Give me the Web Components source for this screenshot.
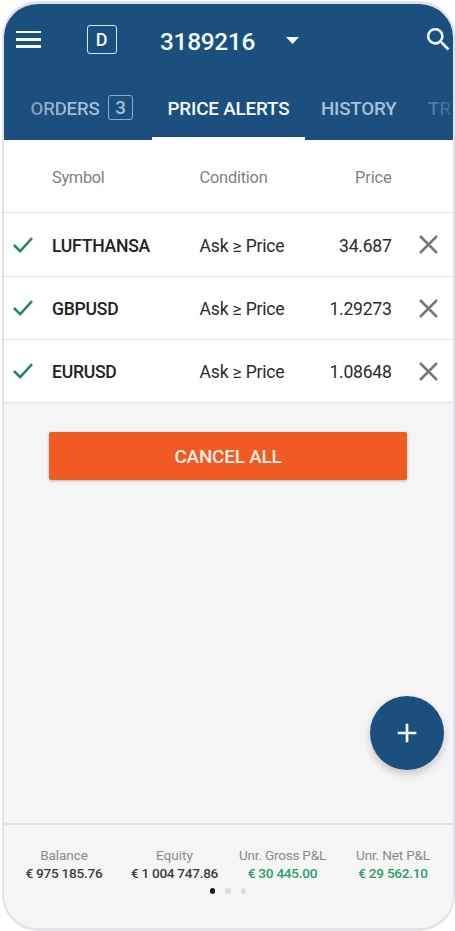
<!DOCTYPE html>
<html lang="en">
<head>
<meta charset="utf-8">
<title>Price alerts</title>
<style>
html,body{margin:0;height:931px;background:#fff;overflow:hidden}
body{font-family:Roboto,"Liberation Sans",sans-serif}
</style>
</head>
<body>
<trading-app></trading-app>
<script>
const define = (name, html, init) => customElements.define(name, class extends HTMLElement {
  constructor() {
    super();
    this.attachShadow({ mode: 'open' }).innerHTML = html;
  }
  connectedCallback() { if (init) init.call(this, this.shadowRoot); }
});

/* Single line label; "w" is the advance width its letters are tracked to fill. */
define('text-run', `<style>
:host{display:block;white-space:nowrap;line-height:1;width:max-content}
</style><span><slot></slot></span>`, function (root) {
  const span = root.querySelector('span');
  const target = parseFloat(this.getAttribute('w'));
  const count = this.textContent.length;
  if (!target || !count) return;
  const natural = span.getBoundingClientRect().width;
  span.style.letterSpacing = ((target - natural) / count).toFixed(3) + 'px';
});

define('top-bar', `<style>
:host{display:grid;grid-template-columns:25px 46px 30px 43px 95px 31px 13px 123.5px 31px;justify-content:start;align-items:center;height:71px;padding-left:12px;color:#f4fafd}
.menu{display:grid;gap:4.5px;height:17px;align-content:start;margin-top:-1px}
.menu i{height:2.8px;background:#f1f8fc}
.badge{grid-column:3;box-sizing:border-box;width:29.5px;height:29px;border:1.5px solid #d9e8f2;border-radius:3px;display:grid;place-items:center;font-size:18px;font-weight:500;margin-top:0}
.acct{grid-column:5;font-size:24.4px;font-weight:500;margin-top:6px}
.caret{grid-column:7;display:block;margin-top:2px}
.find{grid-column:9;display:block}
</style>
<div class="menu"><i></i><i></i><i></i></div>
<div class="badge"><text-run>D</text-run></div>
<text-run class="acct" w="95">3189216</text-run>
<svg class="caret" width="13" height="7" viewBox="0 0 13 7"><path d="M0 0H13L6.5 7Z" fill="#f4fafd"/></svg>
<svg class="find" width="31" height="31" viewBox="0 0 24 24"><path fill="#f1f8fc" d="M15.5 14h-.79l-.28-.27A6.47 6.47 0 0 0 16 9.5 6.5 6.5 0 1 0 9.5 16c1.61 0 3.09-.59 4.23-1.57l.27.28v.79l5 4.99L20.49 19l-4.99-5zm-6 0C7.01 14 5 11.99 5 9.5S7.01 5 9.5 5 14 7.01 14 9.5 11.99 14 9.5 14z"/></svg>`);

define('tab-bar', `<style>
:host{display:grid;grid-template-columns:148px 153px 107px 41px;height:65px;font-size:18.8px;font-weight:500;color:#a5c1da;overflow:hidden}
div{box-sizing:border-box;display:flex;align-items:center;padding-top:4px}
.orders{padding-left:26.5px;gap:8.5px}
.orders>text-run{background:linear-gradient(90deg,#7f9fbd,#a5c1da 60%);background-clip:text;color:transparent}
.n{box-sizing:border-box;width:25px;height:25px;border:1.3px solid #8fabc6;border-radius:3px;padding:1px 0 0;justify-content:center;margin-top:-4px}
.on{color:#f4fafd;border-bottom:3px solid #fff;padding:7px 0 0 15.5px}
.h{padding-left:16px}
.t{padding-left:16px}
.t text-run{background:linear-gradient(90deg,#5b84a9,#37648f 24px);background-clip:text;color:transparent}
</style>
<div class="orders"><text-run w="69">ORDERS</text-run><div class="n"><text-run>3</text-run></div></div>
<div class="on"><text-run w="122">PRICE ALERTS</text-run></div>
<div class="h"><text-run w="75.5">HISTORY</text-run></div>
<div class="t"><text-run w="23.5">TR</text-run></div>`);

define('alert-head', `<style>
:host{display:grid;grid-template-columns:147.5px 120px 72px;box-sizing:border-box;height:73px;padding:5px 0 0 48px;align-items:center;background:#fff;border-bottom:1.5px solid #e3e3e3;font-size:16.4px;color:#818181}
.p{justify-self:end}
</style><text-run w="52.5">Symbol</text-run><text-run w="68">Condition</text-run><text-run class="p" w="36.5">Price</text-run>`);

define('alert-row', `<style>
:host{display:grid;grid-template-columns:39px 147.5px 90px 102px 1fr;box-sizing:border-box;height:63px;padding-left:9px;align-items:center;background:#fff;border-bottom:1.5px solid #e3e3e3;font-size:17.6px;color:#2b2b2b}
::slotted([slot=symbol]){font-weight:500;color:#222}
.v{justify-self:end}
.s,.c,.v{padding-top:4px}
svg{display:block}
.x{margin-left:27px}
</style>
<svg width="20" height="16" viewBox="0 0 20 16"><path d="M.9 8 7.2 14.2 19 1.2" fill="none" stroke="#248a5a" stroke-width="2.5"/></svg>
<div class="s"><slot name="symbol"></slot></div>
<div class="c"><text-run w="85">Ask ≥ Price</text-run></div>
<div class="v"><slot name="price"></slot></div>
<svg class="x" width="19" height="19" viewBox="0 0 19 19"><path d="M1 1 18 18M18 1 1 18" stroke="#777" stroke-width="2.5"/></svg>`);

define('action-button', `<style>
:host{display:grid;place-items:center;box-sizing:border-box;height:47.5px;padding-top:3px;background:#f05a23;border-radius:2px;box-shadow:0 1px 3px #0004;color:#fdeee3;font-size:18.8px;font-weight:500}
</style><slot></slot>`);

define('add-button', `<style>
:host{display:grid;place-items:center;width:74px;height:74px;border-radius:50%;background:#1b4f7e;box-shadow:0 4px 8px #0003}
</style><svg width="20" height="20" viewBox="0 0 20 20"><path d="M10 .7V19.3M.7 10H19.3" stroke="#f4fafd" stroke-width="2.7"/></svg>`);

define('stat-cell', `<style>
:host{display:grid;justify-items:center;align-content:start;row-gap:4.5px;font-size:13.6px;color:#8a8a8a}
.v{font-weight:500;color:#3d3d3d}
:host([gain]) .v{color:#2b9d68}
</style><slot name="label"></slot><div class="v"><slot></slot></div>`);

define('account-footer', `<style>
:host{display:block;box-sizing:border-box;height:105px;border-top:2px solid #e1e2e3;padding-top:24px}
.cells{display:grid;grid-template-columns:120px 101px 115px 106px}
.dots{display:flex;gap:10px;padding:7.5px 0 0 205.5px}
i{width:5.5px;height:5.5px;border-radius:50%;background:#dcdcdd}
i:first-child{background:#1c1c1c}
</style>
<div class="cells">
<stat-cell><text-run slot="label" w="47.5">Balance</text-run><text-run w="77">€ 975 185.76</text-run></stat-cell>
<stat-cell><text-run slot="label" w="37">Equity</text-run><text-run w="87">€ 1 004 747.86</text-run></stat-cell>
<stat-cell gain><text-run slot="label" w="87">Unr. Gross P&amp;L</text-run><text-run w="69.5">€ 30 445.00</text-run></stat-cell>
<stat-cell gain><text-run slot="label" w="74">Unr. Net P&amp;L</text-run><text-run w="69.5">€ 29 562.10</text-run></stat-cell>
</div>
<div class="dots"><i></i><i></i><i></i></div>`);

define('trading-app', `<style>
:host{display:flex;flex-direction:column;box-sizing:border-box;width:453px;height:930px;margin:1px 0 0 2px;border:solid #e2e3e6;border-width:3px 2.5px 3px 2px;border-radius:36px;overflow:hidden;background:#f5f5f5;position:relative}
header{background:#1b4f7e;height:136px;flex:none}
.first{height:64px}
main{flex:1}
action-button{margin:29px 46px 0 45px}
add-button{position:absolute;left:366px;top:692px}
</style>
<header><top-bar></top-bar><tab-bar></tab-bar></header>
<main>
<alert-head></alert-head>
<alert-row class="first"><text-run slot="symbol" w="98">LUFTHANSA</text-run><text-run slot="price" w="52.5">34.687</text-run></alert-row>
<alert-row><text-run slot="symbol" w="66.5">GBPUSD</text-run><text-run slot="price" w="62">1.29273</text-run></alert-row>
<alert-row><text-run slot="symbol" w="64.5">EURUSD</text-run><text-run slot="price" w="62">1.08648</text-run></alert-row>
<action-button><text-run w="107">CANCEL ALL</text-run></action-button>
</main>
<account-footer></account-footer>
<add-button></add-button>`);
</script>
</body>
</html>
